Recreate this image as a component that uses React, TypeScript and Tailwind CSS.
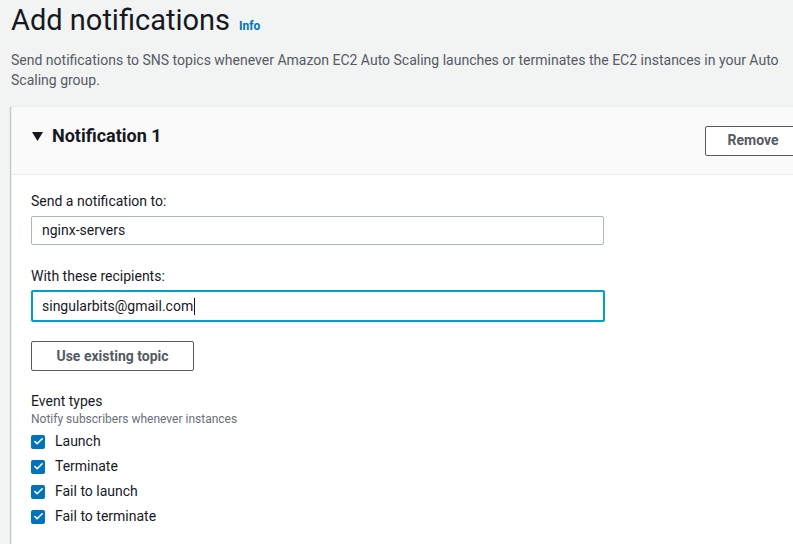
import { Check } from "lucide-react";

const events = ["Launch", "Terminate", "Fail to launch", "Fail to terminate"];

export default function App() {
  return (
    <div className="h-[544px] w-[793px] overflow-hidden bg-[#f2f3f3] font-['Roboto',sans-serif] text-[#16191f]">
      <div className="w-[840px] pl-[11px]">
        <div className="flex items-baseline gap-[9px] pt-[2px]">
          <h1 className="text-[29px] leading-[36px] font-normal text-[#16191f]">Add notifications</h1>
          <a className="text-[12px] font-bold text-[#0073bb]">Info</a>
        </div>
        <p className="mt-[12px] text-[14px] leading-[20px] text-[#545b64]">
          Send notifications to SNS topics whenever Amazon EC2 Auto Scaling launches or terminates the EC2 instances in your Auto
          <br />
          Scaling group.
        </p>

        <section className="mt-[16px] border border-[#eaeded] bg-white shadow-[0_1px_1px_0_rgba(0,28,36,0.3),1px_1px_1px_0_rgba(0,28,36,0.15),-1px_1px_1px_0_rgba(0,28,36,0.15)]">
          <div className="flex h-[68px] items-center justify-between border-b border-[#eaeded] bg-[#fafafa] pl-[20px] pr-[38px]">
            <div className="flex items-center gap-[9px] pb-[10px]">
              <svg width="11" height="9" viewBox="0 0 11 9" className="mt-[1px]">
                <path d="M0 0h11L5.5 9z" fill="#16191f" />
              </svg>
              <h2 className="text-[18px] font-bold">Notification 1</h2>
            </div>
            <button className="h-[30px] w-[96px] rounded-[2px] border border-[#545b64] bg-white text-[14px] font-bold text-[#545b64]">
              Remove
            </button>
          </div>

          <div className="px-[19px] pt-[16px] pb-[20px]">
            <label className="block text-[14px] leading-[20px]">Send a notification to:</label>
            <div className="mt-[5px] flex h-[29px] w-[573px] items-center rounded-[2px] border border-[#aab7b8] px-[10px] text-[14px]">
              nginx-servers
            </div>

            <label className="mt-[21px] block text-[14px] leading-[20px]">With these recipients:</label>
            <div className="mt-[4px] flex h-[32px] w-[574px] items-center rounded-[2px] border-2 border-[#00a1c9] px-[9px] text-[14px]">
              singularbits@gmail.com
              <span className="ml-[1px] inline-block h-[17px] w-px bg-[#16191f]" />
            </div>

            <button className="mt-[19px] h-[30px] w-[163px] rounded-[2px] border border-[#545b64] bg-white text-[14px] font-bold text-[#545b64]">
              Use existing topic
            </button>

            <div className="mt-[20px] text-[14px] leading-[20px]">Event types</div>
            <div className="text-[12px] leading-[16px] text-[#687078]">Notify subscribers whenever instances</div>
            <ul className="mt-[2px]">
              {events.map((e) => (
                <li key={e} className="flex h-[25px] items-center gap-[10px] text-[14px]">
                  <span className="flex h-[14px] w-[14px] items-center justify-center rounded-[2px] bg-[#0073bb]">
                    <Check size={11} strokeWidth={3.5} color="#fff" />
                  </span>
                  {e}
                </li>
              ))}
            </ul>
          </div>
        </section>
      </div>
    </div>
  );
}
